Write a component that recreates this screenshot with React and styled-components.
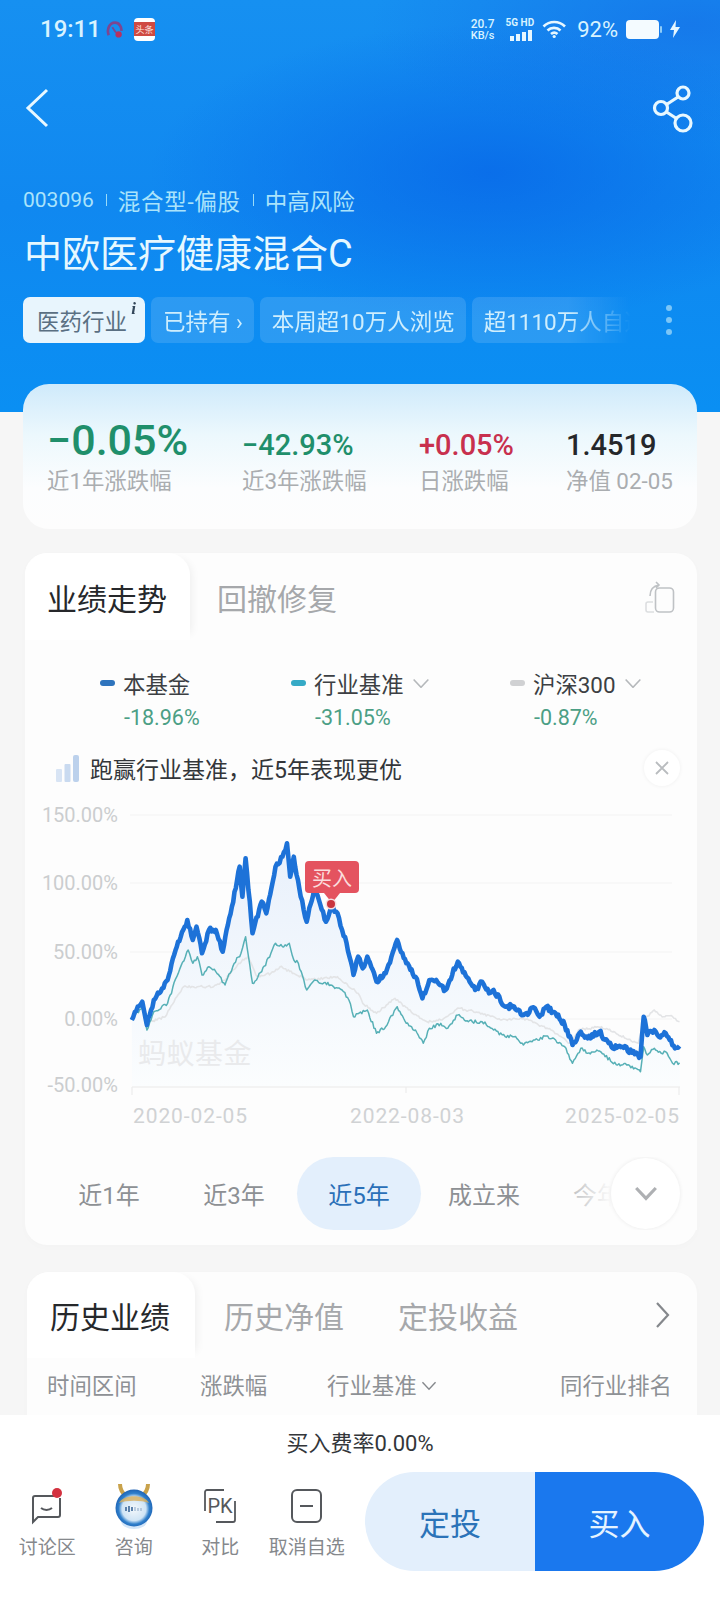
import React from "react";
import styled, { createGlobalStyle } from "styled-components";

const GlobalStyle = createGlobalStyle`
  html, body { margin: 0; padding: 0; background: #f6f6f6; }
  body { font-family: Roboto, "Noto Sans CJK SC", sans-serif; }
`;

// chart traces, read off the reference as [x, y] pairs in 2.178x / 3x zoom units
const BLUE = [[287,690],[300,650],[310,635],[320,705],[335,630],[350,605],[365,570],[385,470],[408,390],[420,450],[428,410],[440,490],[455,420],[470,420],[485,485],[505,350],[522,230],[528,320],[535,205],[550,430],[570,335],[580,370],[600,230],[615,200],[625,160],[632,260],[640,200],[655,320],[668,395],[685,290],[710,395],[722,350],[735,370],[745,420],[755,460],[770,555],[780,500],[790,535],[800,500],[820,575],[840,550],[865,450],[885,520],[905,560],[920,625],[935,570],[950,570],[970,600],[997,515],[1020,565],[1035,600],[1050,575],[1065,610],[1075,600],[1100,650],[1120,650],[1140,675],[1165,655],[1175,680],[1190,650],[1210,670],[1230,705],[1247,765],[1265,725],[1280,745],[1305,725],[1335,775],[1355,770],[1395,800],[1402,680],[1410,735],[1425,720],[1435,740],[1450,730],[1470,775],[1480,768]];
const TEAL = [[287,690],[310,650],[320,720],[335,665],[365,640],[385,560],[410,480],[420,520],[430,500],[440,555],[455,530],[470,545],[490,585],[510,520],[525,490],[535,440],[550,580],[570,545],[590,490],[600,460],[615,470],[630,460],[640,510],[650,520],[668,600],[685,570],[720,585],[745,600],[760,630],[770,680],[800,660],[820,730],[840,710],[865,650],[885,700],[905,720],[922,760],[935,715],[960,700],[975,715],[997,675],[1020,695],[1050,695],[1075,720],[1100,740],[1120,740],[1140,765],[1165,750],[1190,738],[1210,750],[1230,770],[1247,820],[1265,775],[1280,790],[1300,780],[1345,825],[1365,825],[1395,845],[1402,770],[1410,795],[1425,775],[1440,790],[1450,785],[1465,820],[1480,818]];
const GRAY = [[330,695],[360,680],[385,620],[400,590],[430,590],[465,590],[490,570],[520,520],[540,500],[560,560],[590,550],[610,530],[640,550],[670,570],[735,560],[780,610],[790,640],[820,670],[860,625],[890,660],[930,695],[960,690],[1000,655],[1050,670],[1090,690],[1140,685],[1200,720],[1240,760],[1260,720],[1310,710],[1390,760],[1402,690],[1425,660],[1445,680],[1465,680],[1480,695]];

const noise = (i, seed) => {
  const v = Math.sin(i * 12.9898 + seed) * 43758.5453;
  return v - Math.floor(v) - 0.5;
};

const trace = (points, amp, seed) => {
  const out = [];
  let n = 0;
  for (let i = 0; i < points.length - 1; i++) {
    const [x0, y0] = points[i];
    const [x1, y1] = points[i + 1];
    const steps = Math.max(1, Math.round((x1 - x0) / 3));
    for (let s = 0; s < steps; s++) {
      const t = s / steps;
      const x = (x0 + (x1 - x0) * t) / 2.178;
      const y = (y0 + (y1 - y0) * t) / 3 + 790 + (s === 0 ? 0 : noise(n++, seed) * amp);
      out.push(`${x.toFixed(1)} ${y.toFixed(1)}`);
    }
  }
  const [lx, ly] = points[points.length - 1];
  out.push(`${(lx / 2.178).toFixed(1)} ${(ly / 3 + 790).toFixed(1)}`);
  return "M" + out.join("L");
};

const bluePath = trace(BLUE, 5, 1);
const tealPath = trace(TEAL, 3.6, 2);
const grayPath = trace(GRAY, 2.4, 3);

const Page = styled.div`
  width: 720px;
  height: 1612px;
  display: flex;
  flex-direction: column;
  overflow: hidden;
  background: #f6f6f6;
`;

const Main = styled.main`
  flex: 1;
  min-height: 0;
  overflow: hidden;
`;

const Header = styled.header`
  height: 412px;
  box-sizing: border-box;
  background:
    radial-gradient(ellipse 340px 150px at 68% 42%, rgba(8, 104, 232, 0.8), rgba(8, 104, 232, 0) 100%),
    radial-gradient(ellipse 320px 120px at 96% 6%, rgba(22, 112, 232, 0.7), rgba(22, 112, 232, 0) 100%),
    linear-gradient(180deg, #1690f1 0%, #1088f0 50%, #0a8ff3 100%);
`;

const StatusBar = styled.div`
  height: 58px;
  padding: 0 40px;
  display: flex;
  align-items: center;
  justify-content: space-between;
  color: #d8f3ff;
`;

const StatusGroup = styled.div`
  display: flex;
  align-items: center;
  gap: ${(p) => p.$gap || 10}px;
`;

const Time = styled.span`
  font-size: 24px;
  font-weight: 500;
  width: 56px;
`;

const NetSpeed = styled.span`
  display: flex;
  flex-direction: column;
  align-items: center;
  margin-right: 3px;
  font-size: 11px;
  font-weight: 500;
  line-height: 11px;
  span:first-child { font-size: 12px; line-height: 12px; }
`;

const Signal = styled.span`
  display: flex;
  flex-direction: column;
  align-items: flex-end;
  gap: 2px;
  font-size: 10px;
  font-weight: 700;
  line-height: 10px;
  white-space: nowrap;
`;

const Percent = styled.span`
  font-size: 22px;
  margin-left: 2px;
`;

const NavRow = styled.nav`
  margin-top: 20px;
  height: 60px;
  padding: 0 27px 0 25px;
  display: flex;
  align-items: center;
  justify-content: space-between;
`;

const MetaRow = styled.div`
  margin-top: 47px;
  padding-left: 23px;
  display: flex;
  align-items: center;
  height: 30px;
  font-size: 22.5px;
  color: #aae3fb;
  white-space: nowrap;
`;

const MetaCode = styled.span`
  font-size: 21px;
`;

const MetaType = styled.span`
  letter-spacing: 0.7px;
`;

const MetaSep = styled.i`
  width: 1px;
  height: 12px;
  margin: 0 11px 0 12px;
  background: #9adbf8;
`;

const Title = styled.h1`
  margin: 14px 0 0 24px;
  font-size: 38px;
  line-height: 50px;
  font-weight: 400;
  color: #e6f8ff;
  white-space: nowrap;
`;

const TagRow = styled.div`
  margin-top: 18px;
  padding: 0 48px 0 23px;
  display: flex;
  align-items: center;
`;

const TagScroller = styled.div`
  width: 620px;
  display: flex;
  gap: 6px;
  overflow: hidden;
  mask-image: linear-gradient(90deg, #000 88%, transparent 98%);
`;

const Tag = styled.span`
  position: relative;
  flex: none;
  height: 46px;
  padding: ${(p) => (p.$active ? "0 18px 0 14px" : "0 11px 0 12px")};
  display: flex;
  align-items: center;
  border-radius: 7px;
  font-size: 22.5px;
  white-space: nowrap;
  color: ${(p) => (p.$active ? "#5a6f82" : "#cfeefd")};
  background: ${(p) => (p.$active ? "#e8f5fd" : "rgba(255, 255, 255, 0.13)")};
`;

const TagInfo = styled.b`
  position: absolute;
  top: 3px;
  right: 9px;
  font: italic 700 17px/18px "Liberation Serif", serif;
  color: #33475a;
`;

const Dots = styled.div`
  margin-left: auto;
  display: flex;
  flex-direction: column;
  gap: 6px;
  i {
    width: 6px;
    height: 6px;
    border-radius: 50%;
    background: #7cc6f7;
  }
`;

const SummaryCard = styled.section`
  margin: -28px 23px 0;
  height: 145px;
  box-sizing: border-box;
  padding: 33px 0 0 24px;
  display: grid;
  grid-template-columns: 195px 177px 147px 1fr;
  border-radius: 26px;
  background: linear-gradient(180deg, #cfeafb 0%, #ecf8fd 35%, #fcfdfe 72%, #fdfdfd 100%);
`;

const Stat = styled.div`
  display: flex;
  flex-direction: column;
`;

const StatValue = styled.div`
  height: 46px;
  display: flex;
  align-items: flex-end;
  font-size: ${(p) => (p.$big ? 43 : 29)}px;
  line-height: ${(p) => (p.$big ? 46 : 36)}px;
  font-weight: 500;
  white-space: nowrap;
  color: ${(p) => p.$color};
`;

const StatLabel = styled.div`
  margin-top: 5px;
  font-size: 22.4px;
  line-height: 26px;
  color: #aaadb0;
  white-space: nowrap;
`;

const Card = styled.section`
  position: relative;
  width: ${(p) => p.$width}px;
  min-height: ${(p) => p.$minHeight || 0}px;
  box-sizing: border-box;
  margin: ${(p) => p.$margin};
  padding-bottom: ${(p) => p.$bottom || 0}px;
  border-radius: 22px;
  background: #fdfdfd;
  box-shadow: 0 2px 8px rgba(0, 0, 0, 0.015);
`;

const TabBar = styled.div`
  height: ${(p) => p.$height}px;
  display: flex;
  align-items: center;
  padding-right: 22px;
`;

const Tab = styled.div`
  align-self: stretch;
  flex: none;
  width: ${(p) => p.$width || "auto"};
  box-sizing: border-box;
  padding: 0 0 0 ${(p) => p.$pad}px;
  display: flex;
  align-items: center;
  font-size: 30px;
  white-space: nowrap;
  color: ${(p) => (p.$active ? "#26282b" : "#a6a8ab")};
  ${(p) =>
    p.$active &&
    `
    background: #fff;
    border-radius: 22px 22px 0 0;
    box-shadow: 8px 0 10px -7px rgba(0, 0, 0, 0.07);
  `}
`;

const TabEnd = styled.div`
  margin-left: auto;
  padding-right: ${(p) => p.$inset || 0}px;
  display: flex;
  align-items: center;
`;

const Legend = styled.div`
  padding: 30px 0 0 75px;
  display: grid;
  grid-template-columns: 191px 219px 1fr;
`;

const LegendName = styled.div`
  display: flex;
  align-items: center;
  height: 26px;
  font-size: 22.4px;
  color: #3c3f43;
  white-space: nowrap;
`;

const LegendDot = styled.i`
  width: 15px;
  height: 6px;
  margin-right: 8px;
  border-radius: 3px;
  background: ${(p) => p.$color};
`;

const LegendMore = styled.span`
  margin-left: 8px;
  display: flex;
`;

const LegendValue = styled.div`
  margin-top: 9px;
  padding-left: 24px;
  font-size: 21.5px;
  line-height: 26px;
  color: #4c9f85;
`;

const Banner = styled.div`
  margin-top: 19px;
  height: 36px;
  padding: 0 17px 0 31px;
  display: flex;
  align-items: center;
  gap: 11px;
  font-size: 23px;
  color: #33363a;
`;

const Close = styled.span`
  margin-left: auto;
  width: 36px;
  height: 36px;
  display: flex;
  align-items: center;
  justify-content: center;
  border-radius: 50%;
  background: #fff;
  box-shadow: 0 0 4px rgba(0, 0, 0, 0.06);
`;

const ChartWrap = styled.div`
  position: relative;
  margin-top: 4px;
  height: 345px;
  svg { display: block; }
`;

const BuyFlag = styled.div`
  position: absolute;
  left: 280px;
  top: 71px;
  width: 54px;
  height: 32px;
  display: flex;
  align-items: center;
  justify-content: center;
  border-radius: 4px;
  background: #e4535f;
  color: #fbdcdc;
  font-size: 20px;
  &::after {
    content: "";
    position: absolute;
    left: 19px;
    top: 32px;
    border: 8px solid transparent;
    border-top: 10px solid #e4535f;
    border-bottom: 0;
  }
`;

const BuyDot = styled.i`
  position: absolute;
  left: 302px;
  top: 110px;
  width: 8px;
  height: 8px;
  border-radius: 50%;
  background: #c9353f;
  box-shadow: 0 0 0 1.5px #f5dde0;
`;

const RangeRow = styled.div`
  position: relative;
  margin-top: 22px;
  height: 73px;
  padding-left: 22px;
  display: flex;
  gap: 1px;
  overflow: hidden;
`;

const RangeItem = styled.div`
  flex: none;
  width: 124px;
  display: flex;
  align-items: center;
  justify-content: center;
  border-radius: 37px;
  font-size: 24px;
  color: ${(p) => (p.$active ? "#2a6fb8" : "#8d9094")};
  background: ${(p) => (p.$active ? "#e3effc" : "transparent")};
`;

const RangeFade = styled.div`
  position: absolute;
  top: 0;
  right: 0;
  bottom: 0;
  width: 137px;
  padding-right: 17px;
  box-sizing: border-box;
  display: flex;
  align-items: center;
  justify-content: flex-end;
  background: linear-gradient(90deg, rgba(253, 253, 253, 0.3) 0%, #fdfdfd 38%);
`;

const RangeMore = styled.div`
  width: 69px;
  height: 71px;
  display: flex;
  align-items: center;
  justify-content: center;
  border-radius: 50%;
  background: #fff;
  box-shadow: 0 0 4px rgba(0, 0, 0, 0.08);
`;

const HistoryHead = styled.div`
  margin-top: 14px;
  padding-left: 20px;
  display: grid;
  grid-template-columns: 153px 127px 233px 1fr;
  font-size: 22.4px;
  line-height: 28px;
  color: #8e9195;
  white-space: nowrap;
`;

const HeadCell = styled.span`
  display: flex;
  align-items: center;
  gap: 4px;
`;

const BottomBar = styled.footer`
  height: 197px;
  flex: none;
  box-sizing: border-box;
  padding-top: 16px;
  background: #fff;
`;

const Fee = styled.div`
  height: 26px;
  text-align: center;
  font-size: 22px;
  line-height: 26px;
  color: #33363a;
`;

const ActionRow = styled.div`
  margin-top: 15px;
  padding-left: 4px;
  display: flex;
  align-items: flex-start;
`;

const Action = styled.div`
  width: 86.5px;
  margin-top: 8px;
  display: flex;
  flex-direction: column;
  align-items: center;
  font-size: 19px;
  line-height: 24px;
  color: #85888c;
  white-space: nowrap;
`;

const ActionIcon = styled.div`
  height: 52px;
  margin-bottom: 4px;
  display: flex;
  align-items: center;
  justify-content: center;
`;

const Buttons = styled.div`
  margin-left: 15px;
  display: flex;
`;

const BigButton = styled.div`
  width: ${(p) => (p.$primary ? 169 : 170)}px;
  height: 99px;
  display: flex;
  align-items: center;
  justify-content: center;
  font-size: 31px;
  color: ${(p) => (p.$primary ? "#e4f3ff" : "#2b73b8")};
  background: ${(p) => (p.$primary ? "#1a78ee" : "#e3effc")};
  border-radius: ${(p) => (p.$primary ? "0 50px 50px 0" : "50px 0 0 50px")};
`;

const SpeedIcon = () => (
  <svg width="18" height="18" viewBox="0 0 20 20" fill="none">
    <path d="M3 17C0.5 10 4 3 10 3c5 0 7.5 5 7 9" stroke="#7d4690" strokeWidth="3" />
    <path d="M7 8l4 6" stroke="#7d4690" strokeWidth="2" />
    <circle cx="14" cy="16" r="3.5" fill="#b8305f" />
  </svg>
);

const NewsIcon = () => (
  <svg width="21" height="23" viewBox="0 0 21 23">
    <rect width="21" height="23" rx="4" fill="#fff" />
    <rect y="4" width="21" height="14" fill="#cf4a42" />
    <text x="10.5" y="15" textAnchor="middle" fontSize="9" fill="#fde7e0" fontFamily="Noto Sans CJK SC">头条</text>
  </svg>
);

const WifiIcon = () => (
  <svg width="25" height="20" viewBox="0 0 25 20" fill="none" stroke="#e6f7ff" strokeWidth="2.6">
    <path d="M1.5 7.5C7.5 1.5 17 1.5 23 7.5" />
    <path d="M5.5 11.5C9 8 15 8 18.5 11.5" />
    <path d="M9 15c2-1.8 4.5-1.8 6.5 0" />
    <circle cx="12.2" cy="17.5" r="1.6" fill="#e6f7ff" stroke="none" />
  </svg>
);

const BatteryIcon = () => (
  <svg width="36" height="19" viewBox="0 0 36 19">
    <rect width="33" height="19" rx="4" fill="#f4fbff" />
    <rect x="34" y="6" width="2" height="7" rx="1" fill="#8fcdf8" />
  </svg>
);

const BoltIcon = () => (
  <svg width="10" height="18" viewBox="0 0 10 18">
    <path d="M6 0L0 10h4l-1 8 7-11H5.500z" fill="#e6f7ff" />
  </svg>
);

const BackIcon = () => (
  <svg width="24" height="40" viewBox="0 0 24 40" fill="none" stroke="#e8f8ff" strokeWidth="3">
    <path d="M22 2L3 20l19 18" />
  </svg>
);

const ShareIcon = () => (
  <svg width="42" height="50" viewBox="0 0 42 50" fill="none" stroke="#e8f8ff" strokeWidth="3.200">
    <circle cx="32" cy="10" r="6" />
    <circle cx="10" cy="25" r="6.500" />
    <circle cx="32" cy="40" r="8" />
    <path d="M27 14L15.500 21.500M15.500 29L25.500 35.500" />
  </svg>
);

const RotateIcon = () => (
  <svg width="30" height="32" viewBox="0 0 30 32" fill="none" stroke="#bfc2c5" strokeWidth="1.600">
    <rect x="10.500" y="7" width="18" height="24" rx="4" />
    <path d="M8 21H3a2 2 0 0 0-2 2v6a2 2 0 0 0 2 2h6" stroke="#dcdee0" />
    <path d="M5 15c0-6 3-10 9-11M11 1l3 3-3 3" />
  </svg>
);

const Chevron = ({ size = 18, color = "#b5b8bb", width = 1.6 }) => (
  <svg width={size} height={size * 0.6} viewBox="0 0 18 11" fill="none" stroke={color} strokeWidth={width}>
    <path d="M1.500 1.500L9 9.500l7.500-8" />
  </svg>
);

const BarsIcon = () => (
  <svg width="23" height="27" viewBox="0 0 23 27" fill="#c9daf0">
    <rect y="14" width="6" height="13" rx="1" fill="#d8e4f4" />
    <rect x="8.500" y="9" width="6" height="18" rx="1" />
    <rect x="17" y="0" width="6" height="27" rx="2" fill="#bcd1ec" />
  </svg>
);

const CloseIcon = () => (
  <svg width="14" height="14" viewBox="0 0 14 14" stroke="#b9bcbf" strokeWidth="1.800">
    <path d="M1 1l12 12M13 1L1 13" />
  </svg>
);

const RightIcon = () => (
  <svg width="15" height="26" viewBox="0 0 15 26" fill="none" stroke="#85888c" strokeWidth="2.200">
    <path d="M2 1l11 12L2 25" />
  </svg>
);

const ChatIcon = () => (
  <svg width="36" height="38" viewBox="0 0 36 38" fill="none">
    <path d="M31 11v17a2 2 0 0 1-2 2H9l-5 5V11a2 2 0 0 1 2-2h19" stroke="#55585c" strokeWidth="2" />
    <path d="M12 21c3 2.500 8 2.500 11 0" stroke="#55585c" strokeWidth="2" />
    <circle cx="28" cy="6" r="5" fill="#d3313f" />
  </svg>
);

const AdvisorIcon = () => (
  <svg width="38" height="46" viewBox="0 0 38 46">
    <defs>
      <radialGradient id="advisorBall" cx="50%" cy="52%" r="52%">
        <stop offset="0%" stopColor="#f4f8fb" />
        <stop offset="62%" stopColor="#cfe4f5" />
        <stop offset="80%" stopColor="#2f7fcb" />
        <stop offset="100%" stopColor="#1d62b4" />
      </radialGradient>
    </defs>
    <path d="M5 1c0 6 3 10 7 13M33 1c0 6-3 10-7 13" stroke="#c9a24b" strokeWidth="4" fill="none" />
    <ellipse cx="19" cy="38" rx="13" ry="8" fill="#d4e6f8" />
    <circle cx="19" cy="25" r="18.500" fill="url(#advisorBall)" />
    <path d="M4 20c4-9 26-9 30 0-8-3-22-3-30 0z" fill="#d8ae5a" opacity="0.8" />
    <path d="M11 24v4M14 23v6M17 24v4" stroke="#2f5d93" strokeWidth="1.500" />
    <path d="M20 24v4M23 25v3M26 25v3" stroke="#a8bfd6" strokeWidth="1.500" />
  </svg>
);

const PkIcon = () => (
  <svg width="32" height="34" viewBox="0 0 32 34" fill="none" stroke="#55585c" strokeWidth="1.800">
    <path d="M1 22V3a2 2 0 0 1 2-2h17" />
    <path d="M31 12v19a2 2 0 0 1-2 2H12" />
    <text x="16" y="24" textAnchor="middle" fontSize="20" fill="#55585c" stroke="none" fontFamily="Roboto">PK</text>
  </svg>
);

const MinusIcon = () => (
  <svg width="31" height="34" viewBox="0 0 31 34" fill="none" stroke="#55585c" strokeWidth="2">
    <rect x="1" y="1" width="29" height="32" rx="5" />
    <path d="M9 17h13" />
  </svg>
);

const GRID_Y = [815, 883, 952, 1019];
const Y_LABELS = [["150.00%", 822], ["100.00%", 890], ["50.00%", 959], ["0.00%", 1026], ["-50.00%", 1092]];
const X_LABELS = [["2020-02-05", 133], ["2022-08-03", 350], ["2025-02-05", 565]];

const FundChart = () => (
  <ChartWrap>
    <svg width="672" height="345" viewBox="25 790 672 345" fontFamily="Roboto" fontSize="20">
      <defs>
        <linearGradient id="areaFill" x1="0" y1="0" x2="0" y2="1">
          <stop offset="0%" stopColor="#e8f0fb" />
          <stop offset="100%" stopColor="#fbfdfe" />
        </linearGradient>
      </defs>
      {GRID_Y.map((y) => (
        <line key={y} x1="130" x2="672" y1={y} y2={y} stroke="#f6f6f6" strokeWidth="1.500" />
      ))}
      <path d={`${bluePath}L680 1086L132 1086Z`} fill="url(#areaFill)" />
      <path d="M132 1087H680M132 1087v8M406 1087v6M679 1087v8" stroke="#efefef" strokeWidth="1.500" fill="none" />
      {Y_LABELS.map(([label, y]) => (
        <text key={label} x="118" y={y} textAnchor="end" fill="#cbcdcf">{label}</text>
      ))}
      {X_LABELS.map(([label, x]) => (
        <text key={label} x={x} y="1123" fontSize="21" fill="#d0d2d4" letterSpacing="0.900">{label}</text>
      ))}
      <text x="138" y="1064" fontSize="28" letterSpacing="0.500" fill="#e9eaec" fontFamily="Noto Sans CJK SC">蚂蚁基金</text>
      <path d={grayPath} fill="none" stroke="#e3e4e6" strokeWidth="1.600" strokeLinejoin="round" />
      <path d={tealPath} fill="none" stroke="#57b0b6" strokeWidth="1.500" strokeLinejoin="round" />
      <path d={bluePath} fill="none" stroke="#1d72d8" strokeWidth="4.600" strokeLinejoin="round" />
    </svg>
    <BuyFlag>买入</BuyFlag>
    <BuyDot />
  </ChartWrap>
);

const STATS = [
  { value: "−0.05%", label: "近1年涨跌幅", color: "#1f8f6b", big: true },
  { value: "−42.93%", label: "近3年涨跌幅", color: "#1f8f6b" },
  { value: "+0.05%", label: "日涨跌幅", color: "#c8304e" },
  { value: "1.4519", label: "净值 02-05", color: "#25272a" },
];

const LEGEND = [
  { name: "本基金", value: "-18.96%", color: "#2f74bd" },
  { name: "行业基准", value: "-31.05%", color: "#36aac6", more: true },
  { name: "沪深300", value: "-0.87%", color: "#d0d1d3", more: true },
];

const RANGES = ["近1年", "近3年", "近5年", "成立来", "今年来"];

export default function App() {
  return (
    <Page>
      <GlobalStyle />
      <Main>
        <Header>
          <StatusBar>
            <StatusGroup $gap={10}>
              <Time>19:11</Time>
              <SpeedIcon />
              <NewsIcon />
            </StatusGroup>
            <StatusGroup $gap={8}>
              <NetSpeed>
                <span>20.7</span>
                <span>KB/s</span>
              </NetSpeed>
              <Signal>
                <span>5G HD</span>
                <svg width="24" height="11" viewBox="0 0 24 11" fill="#e6f7ff">
                  <rect y="6" width="4" height="5" />
                  <rect x="6" y="4" width="4" height="7" />
                  <rect x="12" y="2" width="4" height="9" />
                  <rect x="18" width="4" height="11" />
                </svg>
              </Signal>
              <WifiIcon />
              <Percent>92%</Percent>
              <BatteryIcon />
              <BoltIcon />
            </StatusGroup>
          </StatusBar>
          <NavRow>
            <BackIcon />
            <ShareIcon />
          </NavRow>
          <MetaRow>
            <MetaCode>003096</MetaCode>
            <MetaSep />
            <MetaType>混合型-偏股</MetaType>
            <MetaSep />
            中高风险
          </MetaRow>
          <Title>中欧医疗健康混合C</Title>
          <TagRow>
            <TagScroller>
              <Tag $active>
                医药行业<TagInfo>i</TagInfo>
              </Tag>
              <Tag>已持有 ›</Tag>
              <Tag>本周超10万人浏览</Tag>
              <Tag>超1110万人自选</Tag>
            </TagScroller>
            <Dots>
              <i />
              <i />
              <i />
            </Dots>
          </TagRow>
        </Header>

        <SummaryCard>
          {STATS.map((s) => (
            <Stat key={s.label}>
              <StatValue $big={s.big} $color={s.color}>{s.value}</StatValue>
              <StatLabel>{s.label}</StatLabel>
            </Stat>
          ))}
        </SummaryCard>

        <Card $width={672} $margin="24px 23px 0 25px" $bottom={15}>
          <TabBar $height={87}>
            <Tab $active $pad={22} $width="165px">业绩走势</Tab>
            <Tab $pad={27}>回撤修复</Tab>
            <TabEnd>
              <RotateIcon />
            </TabEnd>
          </TabBar>
          <Legend>
            {LEGEND.map((item) => (
              <div key={item.name}>
                <LegendName>
                  <LegendDot $color={item.color} />
                  {item.name}
                  {item.more && (
                    <LegendMore>
                      <Chevron />
                    </LegendMore>
                  )}
                </LegendName>
                <LegendValue>{item.value}</LegendValue>
              </div>
            ))}
          </Legend>
          <Banner>
            <BarsIcon />
            跑赢行业基准，近5年表现更优
            <Close>
              <CloseIcon />
            </Close>
          </Banner>
          <FundChart />
          <RangeRow>
            {RANGES.map((r) => (
              <RangeItem key={r} $active={r === "近5年"}>{r}</RangeItem>
            ))}
            <RangeFade>
              <RangeMore>
                <Chevron size={24} color="#aeb0b3" width={2.4} />
              </RangeMore>
            </RangeFade>
          </RangeRow>
        </Card>

        <Card $width={670} $margin="27px 23px 0 27px" $minHeight={200}>
          <TabBar $height={86}>
            <Tab $active $pad={23} $width="168px">历史业绩</Tab>
            <Tab $pad={29}>历史净值</Tab>
            <Tab $pad={54}>定投收益</Tab>
            <TabEnd $inset={5}>
              <RightIcon />
            </TabEnd>
          </TabBar>
          <HistoryHead>
            <span>时间区间</span>
            <span>涨跌幅</span>
            <HeadCell>
              行业基准
              <Chevron size={16} color="#85888c" />
            </HeadCell>
            <span>同行业排名</span>
          </HistoryHead>
        </Card>
      </Main>

      <BottomBar>
        <Fee>买入费率0.00%</Fee>
        <ActionRow>
          <Action>
            <ActionIcon><ChatIcon /></ActionIcon>
            讨论区
          </Action>
          <Action>
            <ActionIcon><AdvisorIcon /></ActionIcon>
            咨询
          </Action>
          <Action>
            <ActionIcon><PkIcon /></ActionIcon>
            对比
          </Action>
          <Action>
            <ActionIcon><MinusIcon /></ActionIcon>
            取消自选
          </Action>
          <Buttons>
            <BigButton>定投</BigButton>
            <BigButton $primary>买入</BigButton>
          </Buttons>
        </ActionRow>
      </BottomBar>
    </Page>
  );
}
